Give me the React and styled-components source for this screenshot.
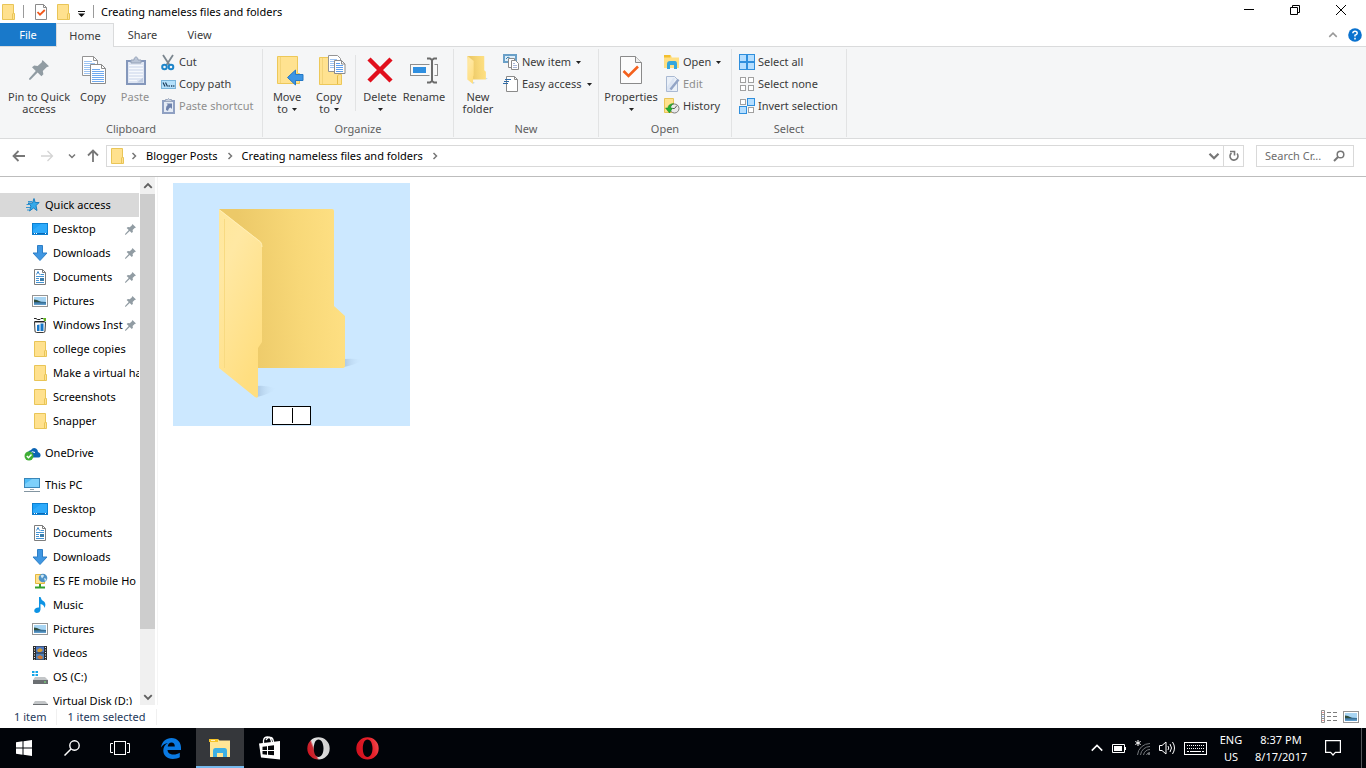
import React, { useState } from "react";
import styled, { createGlobalStyle, css } from "styled-components";

/* ---------- icons ---------- */

const Svg = styled.svg`
  display: block;
  flex: none;
`;

const Icon = ({ w = 16, h = 16, box, children }) => (
  <Svg width={w} height={h} viewBox={box || `0 0 ${w} ${h}`} fill="none" aria-hidden="true">
    {children}
  </Svg>
);

const FolderIcon = () => (
  <Icon w={13} h={16}>
    <path d="M.5.5h11v9h1v6H.5z" fill="#ffe18e" stroke="#e9c557" />
    <path d="M10.5 15.500V10l1-1" stroke="#e9c557" />
  </Icon>
);

const CheckPageIcon = () => (
  <Icon w={12} h={16}>
    <path d="M.5.5h8l3 3v12H.5z" fill="#fff" stroke="#8b8b8b" />
    <path d="M8.5.5v3h3" stroke="#8b8b8b" />
    <path d="M2.5 8l2.5 2.7L9.8 6" stroke="#f2581b" strokeWidth="1.8" />
  </Icon>
);

const PropertiesIcon = () => (
  <Icon w={22} h={28}>
    <path d="M.5.5h15l6 6v21H.5z" fill="#fcfcfc" stroke="#8a8a8a" />
    <path d="M15.5.5v6h6" fill="#eee" stroke="#8a8a8a" />
    <path d="M3.5 15l5 5L18 10.5" stroke="#f4611d" strokeWidth="2.6" />
  </Icon>
);

const PinIcon = ({ size = 20 }) => (
  <Icon w={size} h={size} box="0 0 20 20">
    <path
      d="M13.5 0L20 6.2 17.6 7.2 13.8 11 14.4 14.2 12.4 16.2 8.6 12.6 1.5 19.7H.1V18.4L6.8 11 3 7.2 5.2 5.6 8.6 6 12.6 2.4z"
      fill="#919ca3"
    />
  </Icon>
);

const CopyIcon = () => (
  <Icon w={26} h={28} box="-2 0 26 28">
    <path d="M.5.5h11l4 4v15H.5z" fill="#fff" stroke="#949494" />
    <path d="M11.5.5v4h4" stroke="#949494" />
    <path d="M2 5.5h8M2 7.5h11M2 9.5h7M2 11.5h6M2 13.5h6M2 15.5h6M2 17.5h6" stroke="#9cc3f2" />
    <path d="M8.5 8.5h11l4 4v15h-15z" fill="#fff" stroke="#8b8b8b" />
    <path d="M19.5 8.5v4h4" stroke="#8b8b8b" />
    <path d="M10 13.5h8M10 15.5h12M10 17.5h12M10 19.5h12M10 21.5h12M10 23.5h12M10 25.5h12" stroke="#6fa9ee" />
  </Icon>
);

const PasteIcon = () => (
  <Icon w={22} h={29} box="-2 0 22 29">
    <rect x="1" y="5" width="18" height="23" fill="#dfe6f3" stroke="#8497bb" strokeWidth="2" />
    <path d="M3 9.5h14M3 12.5h14M3 15.5h14M3 18.5h14M3 21.5h14M3 24.5h8" stroke="#f6f9fd" />
    <path d="M11 26.5h6v-5z" fill="#c1cde2" />
    <path d="M5 7V4h3c0-4 4-4 4 0h3v3z" fill="#b9c4d6" stroke="#95a2b8" />
  </Icon>
);

const CutIcon = () => (
  <Icon w={14} h={17}>
    <path d="M2 1l6.5 10M12 1L5.5 11" stroke="#7b868f" strokeWidth="1.8" />
    <circle cx="3.5" cy="13" r="2.3" stroke="#1e85c9" strokeWidth="2" />
    <circle cx="10" cy="13" r="2.3" stroke="#1e85c9" strokeWidth="2" />
  </Icon>
);

const CopyPathIcon = () => (
  <Icon w={15} h={9}>
    <rect x=".5" y=".5" width="14" height="8" fill="#b4e0fb" stroke="#7ab4da" />
    <path d="M2 2.5l2 4M4.5 2.5l2 4" stroke="#1e3d5c" strokeWidth="1.2" />
    <path d="M7.5 6h1.3M10 6h1.3M12.2 6h1.2" stroke="#1e3d5c" strokeWidth="1.3" />
  </Icon>
);

const PasteShortcutIcon = () => (
  <Icon w={13} h={16}>
    <rect x="1" y="3" width="11" height="12" fill="#e4ebf5" stroke="#8fa0c2" strokeWidth="2" />
    <path d="M3.5 3.5v-2h2l1-1 1 1h2v2z" fill="#c4cddd" stroke="#9aa7bd" />
    <path d="M4 12c0-3 .5-4.500 2-5L4.500 5.500H10V11L8.500 9.500C7 10 6.500 11 6 13z" fill="#6f83ad" />
  </Icon>
);

const FolderBody = () => (
  <>
    <path d="M.5 2.5h20v17h2v10H.5z" fill="#ffe290" stroke="#edc859" />
    <path d="M3.5 3v26" stroke="#f3d479" />
    <path d="M18.5 29v-8l1-1.5" stroke="#e6bd49" />
  </>
);

const MoveToIcon = () => (
  <Icon w={34} h={31} box="-7 1 34 31">
    <FolderBody />
    <path d="M10.5 23.5l8-7.500v4.500h7.500v6h-7.500V31z" fill="#3c95e4" stroke="#2579c6" />
  </Icon>
);

const CopyToIcon = () => (
  <Icon w={34} h={31} box="-7 0 34 31">
    <FolderBody />
    <path d="M9.5.5h9l3 3v13h-12z" fill="#fff" stroke="#949494" />
    <path d="M11 4.5h7M11 6.5h5M11 8.5h4M11 10.5h4M11 12.5h4" stroke="#9cc3f2" />
    <path d="M15.5 5.5h7l3.500 3.500v9.500h-10.500z" fill="#fff" stroke="#8b8b8b" />
    <path d="M22.5 5.5v3.500h3.500" stroke="#8b8b8b" />
    <path d="M17 8.5h4M17 10.5h7M17 12.5h7M17 14.5h7M17 16.5h7" stroke="#5f9fec" />
  </Icon>
);

const DeleteIcon = () => (
  <Icon w={26} h={26}>
    <path d="M2 2l22 22M24 2L2 24" stroke="#e10f1c" strokeWidth="4.5" />
  </Icon>
);

const RenameIcon = () => (
  <Icon w={28} h={27}>
    <rect x=".5" y="7.5" width="27" height="11" fill="#f9f9f9" stroke="#8d8d8d" />
    <rect x="3" y="10" width="13" height="6" fill="#2f8fe0" />
    <path d="M22 4v19" stroke="#f5f6f7" strokeWidth="5" />
    <path d="M17 1.500h3l2 1.500 2-1.500h3M22 2v22M17 25.500h3l2-1.500 2 1.500h3" stroke="#6b6b6b" strokeWidth="2" />
  </Icon>
);

const OpenFolder = ({ w, h, id }) => (
  <Icon w={w} h={h} box="46 26 145 190">
    <defs>
      <linearGradient id={`${id}-back`} x1="0" y1=".1" x2="1" y2="0">
        <stop offset=".15" stopColor="#ecc968" />
        <stop offset=".6" stopColor="#f8d878" />
        <stop offset="1" stopColor="#ffe185" />
      </linearGradient>
      <linearGradient id={`${id}-front`} x1="0" y1="0" x2=".5" y2="1">
        <stop offset="0" stopColor="#ffe79b" />
        <stop offset=".3" stopColor="#ffe8a3" />
        <stop offset="1" stopColor="#ffde80" />
      </linearGradient>
      <linearGradient id={`${id}-shade`} x1="0" y1="0" x2="1" y2="0">
        <stop offset="0" stopColor="#acc8e3" />
        <stop offset="1" stopColor="#cce8ff" stopOpacity="0" />
      </linearGradient>
    </defs>
    <path d="M171 176q10-1 19 1-8 5-19 7z" fill={`url(#${id}-shade)`} />
    <path d="M84 203q10-1 20 3-8 5-20 8z" fill={`url(#${id}-shade)`} />
    <path d="M46 26H159q2 0 2 2v95l11 10v50q0 2-2 2H80z" fill={`url(#${id}-back)`} />
    <path d="M46 26l41 32q2 2 2 5v96l-4 6v48q0 3-3 1L46 185z" fill={`url(#${id}-front)`} />
    <path d="M46.5 27l41 32q1.500 2 1.500 5" stroke="#ffeeb5" />
    <path d="M51.5 36v149" stroke="#f8da82" />
  </Icon>
);

const NewItemIcon = () => (
  <Icon>
    <rect x="1" y="1" width="12" height="7" fill="#dceefa" stroke="#6aa0c8" strokeWidth="2" />
    <path d="M3 5l2-2 3 2" stroke="#3b7fae" />
    <path d="M5.5 4.5h6v9h-6z" fill="#fff" stroke="#8a8a8a" />
    <path d="M8.5 6.5h4l3 3v6h-7z" fill="#fff" stroke="#8a8a8a" />
    <path d="M10 9.5h2M10 11.5h4M10 13.5h4" stroke="#a9b7d8" />
  </Icon>
);

const EasyAccessIcon = () => (
  <Icon>
    <path d="M3.5.5h8l3 3v12h-11z" fill="#fff" stroke="#8a8a8a" />
    <path d="M11.5.5v3h3" stroke="#8a8a8a" />
    <path d="M2 3.5h6M1 5.5h5M0 7.5h5" stroke="#2d6aa6" />
  </Icon>
);

const OpenIcon = () => (
  <Icon>
    <path d="M0 1.5h7l1 2h7V14H0z" fill="#ffdf83" />
    <path d="M0 1h6.5v2.500H0z" fill="#f3bf2e" />
    <path d="M3 15V10q0-3 3-3h5q2 0 2 3v5h-3v-4H6v4z" fill="#34a6dd" />
  </Icon>
);

const EditIcon = () => (
  <Icon w={15}>
    <path d="M1.5.5h8l3 3v12h-11z" fill="#eaf0f8" stroke="#a9b9d2" />
    <path d="M2 15V11l6-9h2l-4 13z" fill="#dce5f3" />
    <path d="M13.5 3.5l-8 10" stroke="#93a5c6" strokeWidth="2.5" />
  </Icon>
);

const HistoryIcon = () => (
  <Icon>
    <path d="M.5.5h9v9h1v5H.5z" fill="#ffe18e" stroke="#e9c557" />
    <circle cx="10.5" cy="10.5" r="4.5" fill="#e9e9e9" stroke="#7d7d7d" />
    <path d="M10.5 10.500l2.500-3M10.500 10.500h-2" stroke="#555" />
    <path d="M9.5 5.500Q4 6 4 10H1.500l4 5 3-5H6.500q0-3 3-4.500z" fill="#25b031" stroke="#12861c" strokeWidth=".5" />
  </Icon>
);

const SelectIcon = ({ on }) => (
  <Icon>
    {[[0, 0], [8, 0], [0, 8], [8, 8]].map(([x, y], i) =>
      on[i] ? (
        <rect key={i} x={x + 0.5} y={y + 0.5} width="7" height="7" fill="#b5deff" stroke="#2f8fdd" />
      ) : (
        <rect key={i} x={x + 1.5} y={y + 1.5} width="5" height="5" fill="#fff" stroke="#a0a0a0" />
      )
    )}
  </Icon>
);

const Chevron = ({ dir = "down", size = 8, color = "#777", weight = 1.5 }) => {
  const d = {
    down: "M1 2.5l3 3 3-3",
    up: "M1 5.5l3-3 3 3",
    right: "M2.5 1l3 3-3 3",
  }[dir];
  return (
    <Icon w={size} h={size} box="0 0 8 8">
      <path d={d} stroke={color} strokeWidth={weight} />
    </Icon>
  );
};

const Caret = () => (
  <Icon w={5} h={3}>
    <path d="M0 0h5L2.5 3z" fill="#222" />
  </Icon>
);

const Arrow = ({ dir, color = "#777" }) => {
  const d = {
    left: "M13 7H1.5M6.5 2l-5 5 5 5",
    right: "M1 7h11.5M7.5 2l5 5-5 5",
    up: "M7 13V1.5M2 6.5l5-5 5 5",
  }[dir];
  return (
    <Icon w={14} h={14}>
      <path d={d} stroke={color} strokeWidth={dir === "right" ? 1.3 : 1.8} />
    </Icon>
  );
};

const StarIcon = () => (
  <Icon>
    <path d="M10 1.500l1.200 4h4l-3.200 3 1 5L9.500 11l-4 3 1.500-5L4 6h4.500z" fill="#35a9e9" stroke="#1b7fc0" />
    <path d="M4 4.5h4M2.5 7.5h4M2 10.5h4M3 13h2" stroke="#3596d0" />
  </Icon>
);

const DesktopIcon = () => (
  <Icon>
    <rect x=".5" y="2.5" width="15" height="11" fill="#1ea1f7" stroke="#0c7fd0" />
    <path d="M1 13V9l8-6h6v10z" fill="#2fabfb" />
    <path d="M1 12.5h14" stroke="#0a69b5" />
    <path d="M2 12.5h1M4 12.5h1M13 12.5h1" stroke="#fff" />
  </Icon>
);

const DownloadIcon = () => (
  <Icon>
    <path d="M5.5.5h5v7.500h4.500L8 15.500 1 8h4.500z" fill="#3f97e2" stroke="#2e7fc6" />
  </Icon>
);

const DocumentIcon = () => (
  <Icon>
    <path d="M2.5.5h8l3 3v12h-11z" fill="#fff" stroke="#7d7d7d" />
    <path d="M10.5.5v3h3" stroke="#7d7d7d" />
    <path d="M4.5 5.5l1.500-3 1.500 3" stroke="#3a86c8" />
    <path d="M8.5 5.5H12M4 7.5h8M4 9.5h3M4 11.5h3M4 13.5h8" stroke="#4393d3" />
    <rect x="8" y="9" width="4" height="3" fill="#3a7dab" />
  </Icon>
);

const PictureIcon = () => (
  <Icon>
    <rect x=".5" y="2.5" width="15" height="11" fill="#fff" stroke="#959595" />
    <rect x="2" y="4" width="12" height="8" fill="#a8d5f3" />
    <path d="M2 7l5 1.500L14 9v3H2z" fill="#3a7095" />
    <path d="M2 6.5l3 .5 4 2H2z" fill="#2f4d3c" />
    <path d="M2 10.5h12V12H2z" fill="#5f9ccb" />
  </Icon>
);

const RecycleIcon = () => (
  <Icon>
    <path d="M2.500 5h11l-.5 9q0 1.500-1.500 1.500h-7Q3 15.500 3 14z" fill="#fff" stroke="#3a3a3a" />
    <path d="M2 1.500h2l1.500 1H8l1-1h2M2.500 4.500h10" stroke="#222" />
    <path d="M11 1h3v3h-2z" fill="#5fb321" />
    <path d="M5 8l2.500-.5V14H5zM8.500 6.500h3V14h-3z" fill="#1577c9" />
  </Icon>
);

const CloudIcon = () => (
  <Icon w={17}>
    <path d="M4 10q-1-4 3-5 2-3 5-1.500 2 1 2 3.500 3 1 2.500 4-.5 1.500-2 1.500H6z" fill="#0b64b4" />
    <path d="M6 8.5q2-3 5-1" stroke="#fff" />
    <circle cx="5" cy="11" r="4.5" fill="#3fae36" />
    <path d="M2.8 11l1.700 1.800L7.500 9.500" stroke="#fff" strokeWidth="1.4" />
  </Icon>
);

const ComputerIcon = () => (
  <Icon>
    <rect x=".5" y="1.5" width="15" height="9" fill="#4fbcf7" stroke="#3a86b8" />
    <path d="M1 10V7l7-5h7v8z" fill="#7dd0fb" />
    <path d="M6 12.5h4" stroke="#9aa7b0" />
    <path d="M0 14.5h16" stroke="#8395a1" />
  </Icon>
);

const FtpIcon = () => (
  <Icon>
    <path d="M3.5 1.5h9v9h-9z" fill="#ffe18e" stroke="#e3b93f" />
    <circle cx="11" cy="5" r="4.3" fill="#4f93c8" />
    <path d="M8.5 2.500q3-1.500 3.500.5l-2 2.500zM12 5l2.500 1-1.500 2.500z" fill="#cfe9f6" />
    <path d="M8 11v3M3 14.5h10" stroke="#34a02c" strokeWidth="2" />
  </Icon>
);

const MusicIcon = () => (
  <Icon>
    <path d="M7 0h1.500q.5 3 3.500 4.500 2.500 2.500.5 6.500-.5-3.500-4-4v5.500Q8 16 4.500 16 1.500 15.500 2.500 12.500 4 10 7 10.500z" fill="#0d93e4" />
  </Icon>
);

const VideoIcon = () => (
  <Icon>
    <rect x="1" y="1" width="14" height="14" fill="#2d2d2d" />
    <rect x="4" y="1.5" width="8" height="6" fill="#4d79c4" />
    <rect x="4" y="8.5" width="8" height="6" fill="#4e81bb" />
    <path d="M5 5l3-2 3 2-2 2H6z" fill="#d59a2e" />
    <path d="M5 12l3-2 3 2-1 2H7z" fill="#cf7a34" />
    <path d="M2.5 2v13M13.5 2v13" stroke="#eee" strokeDasharray="1 1.5" />
  </Icon>
);

const DriveIcon = ({ windows }) => (
  <Icon>
    <path d="M3 8h10l3 3H1z" fill="#c3c6c8" />
    <path d="M1 11h15v4H1z" fill="#6b6f72" />
    <path d="M12 13h2" stroke="#7df07d" />
    {windows && <path d="M0 2h2.500v2H0zM3.500 2H6v2H3.500zM0 5h2.500v2H0zM3.500 5H6v2H3.500z" fill="#14a5e8" />}
  </Icon>
);

const RefreshIcon = () => (
  <Icon w={12} h={12}>
    <path d="M9 3.5A4 4 0 1 1 3.500 3" stroke="#777" strokeWidth="1.6" />
    <path d="M2 1.500h4.500v4" stroke="#777" strokeWidth="1.6" />
  </Icon>
);

const SearchIcon = () => (
  <Icon w={12} h={12}>
    <circle cx="7.5" cy="4.5" r="3.3" stroke="#777" strokeWidth="1.5" />
    <path d="M5 7L1 11" stroke="#777" strokeWidth="2" />
  </Icon>
);

const HelpIcon = () => (
  <Icon w={14} h={14}>
    <circle cx="7" cy="7" r="6.8" fill="#0a72cf" />
    <path d="M4.8 5.300Q5 3.300 7 3.300q2.200 0 2.200 1.900Q9.200 6.500 7 7.300V8.500M7 9.800v1.600" stroke="#fff" strokeWidth="1.5" />
  </Icon>
);

const DetailsIcon = () => (
  <Icon h={13}>
    <path d="M.5.5h3v12h-3zM0 4.500h4M0 8.500h4" stroke="#8f8f8f" />
    <path d="M6 2.5h4M12 2.5h4M6 6.5h4M12 6.5h4M6 10.5h4M12 10.5h4" stroke="#7c7c7c" />
    <path d="M1.5 2.5h1M1.5 10.5h1" stroke="#c33" />
    <path d="M1.5 6.5h1" stroke="#36c" />
  </Icon>
);

const ExplorerIcon = () => (
  <Icon w={22} h={18}>
    <path d="M1 0h8l1.500 1.500H21V18H1z" fill="#ffe696" />
    <path d="M0 0h9v3H0z" fill="#f6c427" />
    <path d="M2 1.500h4" stroke="#fff3c4" />
    <path d="M4 18v-6q0-3 2.500-3h9q2.500 0 2.500 3v6h-4v-4H8v4z" fill="#3cb0e5" />
  </Icon>
);

const WinIcon = () => (
  <Icon>
    <path d="M0 2.300L6.500 1.300V7.500H0zM7.500 1.200L16 0v7.500H7.500zM0 8.500h6.500v6.200L0 13.700zM7.500 8.500H16V16l-8.500-1.200z" fill="#fff" />
  </Icon>
);

const TaskSearchIcon = () => (
  <Icon>
    <circle cx="10.5" cy="5.5" r="4.7" stroke="#fff" strokeWidth="1.4" />
    <path d="M7 9L.5 15.500" stroke="#fff" strokeWidth="1.5" />
  </Icon>
);

const TaskViewIcon = () => (
  <Icon w={20} h={14}>
    <rect x="4.5" y=".5" width="11" height="13" stroke="#fff" />
    <path d="M3 2.500H.5v9H3M17 2.500h2.500v9H17" stroke="#fff" />
  </Icon>
);

const EdgeIcon = () => (
  <Icon w={20} h={21}>
    <path
      d="M0 9.500C1 3.500 5 0 10.500 0 16.500 0 20 4.500 20 9.500V12H6.500c.2 3 2.600 4.500 6 4.500 2.300 0 4.500-.7 6.300-1.800v4.600C17 20.400 14.500 21 11.700 21 6 21 2.300 17.600 2.300 12.600c0-3.500 1.700-6 4.700-7.600C4.300 5.300 1.700 6.700 0 9.500zM6.700 8.500h7.100C13.800 6 12.600 4.600 10.500 4.600 8.500 4.600 7.200 6 6.700 8.500z"
      fill="#0a7ae2"
    />
  </Icon>
);

const StoreIcon = () => (
  <Icon w={21} h={24}>
    <path d="M0 7.500L21 5v18.500L2 21.500z" fill="#fff" />
    <path d="M4.5 8V4.500Q5 1 8.500 1q3.500 0 4 5M7 4Q9 .5 12 1.500 14 2 14.500 6" stroke="#fff" strokeWidth="1.3" />
    <path d="M3.500 10.700l4.500-.5v3.800H3.500zM9 10l6-.7V14H9zM3.500 15H8v3.700l-4.500-.4zM9 15h6v4.300l-6-.5z" fill="#05070a" />
  </Icon>
);

const OperaIcon = ({ silver }) => (
  <Icon w={23} h={23}>
    <defs>
      <linearGradient id={silver ? "opera-silver" : "opera-red"} x1="0" y1={silver ? ".7" : ".3"} x2="1" y2={silver ? ".3" : "0"}>
        <stop offset="0" stopColor="#d3121f" />
        <stop offset={silver ? ".28" : ".6"} stopColor={silver ? "#c62a32" : "#e8222b"} />
        <stop offset={silver ? ".36" : "1"} stopColor={silver ? "#e2e2e2" : "#f0585a"} />
        <stop offset="1" stopColor={silver ? "#cfcfcf" : "#f0585a"} />
      </linearGradient>
    </defs>
    <path
      fillRule="evenodd"
      d="M11.500.2a11.200 11.200 0 1 1 0 22.400 11.200 11.200 0 0 1 0-22.400zM11.500 2.500C8.500 2.500 6.800 6.500 6.800 11.300s1.700 8.800 4.700 8.800 5-4 5-8.800-2-8.800-5-8.800z"
      fill={`url(#${silver ? "opera-silver" : "opera-red"})`}
    />
  </Icon>
);

const BatteryIcon = () => (
  <Icon w={15} h={9}>
    <path d="M.5.5h12v8H.5zM13.500 3v3" stroke="#fff" />
    <rect x="2" y="2" width="8" height="5" fill="#fff" />
  </Icon>
);

const WifiIcon = () => (
  <Icon>
    <path d="M3 0v6M.3 1.500l5.400 3M5.700 1.500l-5.400 3" stroke="#fff" />
    <path d="M2.5 15A12.500 12.500 0 0 1 15 3.500M5.500 15A9.500 9.500 0 0 1 15 6.500M8.500 15A6.500 6.500 0 0 1 15 9.500M11.500 15A3.500 3.500 0 0 1 15 12.500" stroke="#75797d" />
    <circle cx="14" cy="14" r="1" fill="#8d9195" />
  </Icon>
);

const VolumeIcon = () => (
  <Icon w={17} h={14}>
    <path d="M.5 4.500h2.500l4-3.500v12L3 9.500H.5z" stroke="#fff" />
    <path d="M9 5q1.500 2 0 4M11 3q3 4 0 8M13.500 1q4 6 0 12" stroke="#fff" />
  </Icon>
);

const KeyboardIcon = () => (
  <Icon w={23} h={13}>
    <rect x=".5" y=".5" width="22" height="12" stroke="#fff" />
    <path d="M3 3.500h17M3 6.500h17" stroke="#fff" strokeDasharray="1 1" />
    <path d="M3 9.500h2M6 9.500h11M18 9.500h2" stroke="#fff" />
  </Icon>
);

const NotificationIcon = () => (
  <Icon>
    <path d="M.6.600h14.800v11.800h-5L8 15l-2.400-2.600h-5z" stroke="#fff" strokeWidth="1.2" />
  </Icon>
);

/* ---------- data ---------- */

const quickAccess = [
  { name: "Desktop", icon: <DesktopIcon />, pinned: true },
  { name: "Downloads", icon: <DownloadIcon />, pinned: true },
  { name: "Documents", icon: <DocumentIcon />, pinned: true },
  { name: "Pictures", icon: <PictureIcon />, pinned: true },
  { name: "Windows Inst", icon: <RecycleIcon />, pinned: true },
  { name: "college copies", icon: <FolderIcon /> },
  { name: "Make a virtual ha", icon: <FolderIcon /> },
  { name: "Screenshots", icon: <FolderIcon /> },
  { name: "Snapper", icon: <FolderIcon /> },
];

const thisPc = [
  { name: "Desktop", icon: <DesktopIcon /> },
  { name: "Documents", icon: <DocumentIcon /> },
  { name: "Downloads", icon: <DownloadIcon /> },
  { name: "ES FE mobile Ho", icon: <FtpIcon /> },
  { name: "Music", icon: <MusicIcon /> },
  { name: "Pictures", icon: <PictureIcon /> },
  { name: "Videos", icon: <VideoIcon /> },
  { name: "OS (C:)", icon: <DriveIcon windows /> },
  { name: "Virtual Disk (D:)", icon: <DriveIcon /> },
];

/* ---------- parts ---------- */

const Big = ({ icon, lines, caret, width, disabled }) => (
  <BigButton type="button" $width={width} disabled={disabled}>
    <BigIcon>{icon}</BigIcon>
    <span>{lines[0]}</span>
    {(lines[1] || caret) && (
      <SecondLine>
        {lines[1]}
        {caret && <Caret />}
      </SecondLine>
    )}
  </BigButton>
);

const Small = ({ icon, label, caret, disabled }) => (
  <SmallButton type="button" disabled={disabled}>
    <IconSlot>{icon}</IconSlot>
    <SmallLabel>{label}</SmallLabel>
    {caret && <Caret />}
  </SmallButton>
);

const NavRow = ({ item, level = 0, selected }) => (
  <NavItem>
    <NavLink href="#" $level={level} $selected={selected}>
      <IconSlot>{item.icon}</IconSlot>
      <NavName>{item.name}</NavName>
      {item.pinned && (
        <PinSlot>
          <PinIcon size={11} />
        </PinSlot>
      )}
    </NavLink>
  </NavItem>
);

const App = () => {
  const [search, setSearch] = useState("");
  const [name, setName] = useState("   ");

  return (
    <>
      <GlobalStyle />
      <Screen>
        <TitleBar>
          <FolderIcon />
          <Divider />
          <QuickItems>
            <CheckPageIcon />
            <FolderIcon />
          </QuickItems>
          <QuickMenu type="button" aria-label="Customize Quick Access Toolbar">
            <Icon w={7} h={6}>
              <path d="M0 .5h7" stroke="#111" />
              <path d="M0 2.5h7L3.500 6z" fill="#111" />
            </Icon>
          </QuickMenu>
          <Divider />
          <Title>Creating nameless files and folders</Title>
          <WindowButtons>
            <WindowButton type="button" aria-label="Minimize">
              <Icon w={10} h={10}><path d="M0 4.500h10" stroke="#000" /></Icon>
            </WindowButton>
            <WindowButton type="button" aria-label="Restore">
              <Icon w={10} h={10}>
                <path d="M.5 2.5h7v7h-7zM2.500 2V.5h7v7H8" stroke="#000" />
              </Icon>
            </WindowButton>
            <WindowButton type="button" aria-label="Close">
              <Icon w={10} h={10}><path d="M0 0l10 10M10 0L0 10" stroke="#000" /></Icon>
            </WindowButton>
          </WindowButtons>
        </TitleBar>

        <Tabs>
          <FileTab type="button">File</FileTab>
          <Tab type="button" $active>Home</Tab>
          <Tab type="button">Share</Tab>
          <Tab type="button">View</Tab>
          <TabTools>
            <PlainButton type="button" aria-label="Minimize the Ribbon">
              <Chevron dir="up" size={10} color="#999" weight={1.2} />
            </PlainButton>
            <PlainButton type="button" aria-label="Help"><HelpIcon /></PlainButton>
          </TabTools>
        </Tabs>

        <Ribbon>
          <Group $width={263}>
            <Tools $pad={6}>
              <Big icon={<PinIcon />} lines={["Pin to Quick", "access"]} width={66} />
              <Big icon={<CopyIcon />} lines={["Copy"]} width={42} />
              <Big icon={<PasteIcon />} lines={["Paste"]} width={42} disabled />
              <SmallColumn>
                <Small icon={<CutIcon />} label="Cut" />
                <Small icon={<CopyPathIcon />} label="Copy path" />
                <Small icon={<PasteShortcutIcon />} label="Paste shortcut" disabled />
              </SmallColumn>
            </Tools>
            <GroupLabel>Clipboard</GroupLabel>
          </Group>
          <Group $width={191}>
            <Tools $pad={3}>
              <Big icon={<MoveToIcon />} lines={["Move", "to"]} width={42} caret />
              <Big icon={<CopyToIcon />} lines={["Copy", "to"]} width={42} caret />
              <ToolDivider />
              <Big icon={<DeleteIcon />} lines={["Delete"]} width={42} caret />
              <Big icon={<RenameIcon />} lines={["Rename"]} width={46} />
            </Tools>
            <GroupLabel>Organize</GroupLabel>
          </Group>
          <Group $width={145}>
            <Tools $pad={3}>
              <Big icon={<OpenFolder w={22} h={28} id="new" />} lines={["New", "folder"]} width={42} />
              <SmallColumn>
                <Small icon={<NewItemIcon />} label="New item" caret />
                <Small icon={<EasyAccessIcon />} label="Easy access" caret />
              </SmallColumn>
            </Tools>
            <GroupLabel>New</GroupLabel>
          </Group>
          <Group $width={133}>
            <Tools $pad={3}>
              <Big icon={<PropertiesIcon />} lines={["Properties"]} width={58} caret />
              <SmallColumn>
                <Small icon={<OpenIcon />} label="Open" caret />
                <Small icon={<EditIcon />} label="Edit" disabled />
                <Small icon={<HistoryIcon />} label="History" />
              </SmallColumn>
            </Tools>
            <GroupLabel>Open</GroupLabel>
          </Group>
          <Group $width={115}>
            <Tools $pad={3}>
              <SmallColumn>
                <Small icon={<SelectIcon on={[1, 1, 1, 1]} />} label="Select all" />
                <Small icon={<SelectIcon on={[0, 0, 0, 0]} />} label="Select none" />
                <Small icon={<SelectIcon on={[0, 1, 1, 0]} />} label="Invert selection" />
              </SmallColumn>
            </Tools>
            <GroupLabel>Select</GroupLabel>
          </Group>
        </Ribbon>

        <AddressBar>
          <NavButtons>
            <PlainButton type="button" aria-label="Back"><Arrow dir="left" /></PlainButton>
            <PlainButton type="button" aria-label="Forward"><Arrow dir="right" color="#d4d4d4" /></PlainButton>
            <Recent type="button" aria-label="Recent locations"><Chevron /></Recent>
            <PlainButton type="button" aria-label="Up"><Arrow dir="up" /></PlainButton>
          </NavButtons>
          <Address>
            <FolderIcon />
            <Crumbs>
              <Chevron dir="right" />
              <Crumb type="button">Blogger Posts</Crumb>
              <Chevron dir="right" />
              <Crumb type="button">Creating nameless files and folders</Crumb>
              <Chevron dir="right" />
            </Crumbs>
            <PlainButton type="button" aria-label="Previous locations">
              <Chevron size={12} />
            </PlainButton>
            <Refresh type="button" aria-label="Refresh"><RefreshIcon /></Refresh>
          </Address>
          <SearchBox>
            <SearchInput
              aria-label="Search"
              placeholder="Search Cr..."
              value={search}
              onChange={(e) => setSearch(e.target.value)}
            />
            <SearchIcon />
          </SearchBox>
        </AddressBar>

        <Body>
          <NavPane>
            <NavList>
              <NavRow item={{ name: "Quick access", icon: <StarIcon /> }} selected />
              {quickAccess.map((item) => (
                <NavRow key={item.name} item={item} level={1} />
              ))}
              <NavGap />
              <NavRow item={{ name: "OneDrive", icon: <CloudIcon /> }} />
              <NavGap />
              <NavRow item={{ name: "This PC", icon: <ComputerIcon /> }} />
              {thisPc.map((item) => (
                <NavRow key={item.name} item={item} level={1} />
              ))}
            </NavList>
          </NavPane>
          <ScrollBar>
            <ScrollButton type="button" aria-label="Scroll up">
              <Chevron dir="up" size={10} color="#606060" />
            </ScrollButton>
            <ScrollTrack><ScrollThumb /></ScrollTrack>
            <ScrollButton type="button" aria-label="Scroll down">
              <Chevron size={10} color="#606060" />
            </ScrollButton>
          </ScrollBar>
          <Files>
            <Tile>
              <OpenFolder w={145} h={190} id="tile" />
              <NameField>
                <NameInput aria-label="Folder name" value={name} onChange={(e) => setName(e.target.value)} />
                <TextCursor />
              </NameField>
            </Tile>
          </Files>
        </Body>

        <StatusBar>
          <StatusText>1 item</StatusText>
          <StatusText>1 item selected</StatusText>
          <ViewButtons>
            <PlainButton type="button" aria-label="Details view"><DetailsIcon /></PlainButton>
            <PlainButton type="button" aria-label="Large thumbnails"><PictureIcon /></PlainButton>
          </ViewButtons>
        </StatusBar>

        <TaskBar>
          <TaskButton type="button" aria-label="Start"><WinIcon /></TaskButton>
          <TaskButton type="button" aria-label="Search"><TaskSearchIcon /></TaskButton>
          <TaskButton type="button" aria-label="Task view"><TaskViewIcon /></TaskButton>
          <Pinned>
            <TaskButton type="button" aria-label="Edge"><EdgeIcon /></TaskButton>
            <TaskButton type="button" aria-label="File Explorer" $active><ExplorerIcon /></TaskButton>
            <TaskButton type="button" aria-label="Store"><StoreIcon /></TaskButton>
            <TaskButton type="button" aria-label="Opera Developer"><OperaIcon silver /></TaskButton>
            <TaskButton type="button" aria-label="Opera"><OperaIcon /></TaskButton>
          </Pinned>
          <Tray>
            <PlainButton type="button" aria-label="Show hidden icons">
              <Chevron dir="up" size={14} color="#fff" weight={0.9} />
            </PlainButton>
            <BatteryIcon />
            <WifiIcon />
            <VolumeIcon />
            <KeyboardIcon />
            <TrayText $width={32}>ENG<br />US</TrayText>
            <TrayText $width={52}>8:37 PM<br />8/17/2017</TrayText>
            <Notifications type="button" aria-label="Notifications"><NotificationIcon /></Notifications>
            <ShowDesktop type="button" aria-label="Show desktop" />
          </Tray>
        </TaskBar>
      </Screen>
    </>
  );
};

/* ---------- styles ---------- */

const GlobalStyle = createGlobalStyle`
  * {
    box-sizing: border-box;
  }
  body {
    margin: 0;
    background: #fff;
  }
  body, button, input {
    font-family: "Noto Sans", "Open Sans", sans-serif;
    font-size: 11px;
    line-height: 16px;
  }
  button {
    padding: 0;
    border: none;
    background: none;
    color: inherit;
    white-space: nowrap;
  }
`;

const Screen = styled.div`
  display: flex;
  flex-direction: column;
  height: 100vh;
  overflow: hidden;
  color: #000;
`;

const PlainButton = styled.button`
  display: flex;
  align-items: center;
  justify-content: center;
`;

const TitleBar = styled.header`
  display: flex;
  align-items: center;
  gap: 8px;
  height: 23px;
  flex: none;
  padding-left: 2px;
`;

const Divider = styled.span`
  width: 1px;
  height: 13px;
  margin-right: 3px;
  background: #9a9a9a;
`;

const QuickItems = styled.div`
  display: flex;
  gap: 10px;
`;

const QuickMenu = styled(PlainButton)`
  margin-top: 4px;
`;

const Title = styled.h1`
  flex: 1;
  margin: 0 0 0 -4px;
  font-size: 11px;
  font-weight: 400;
`;

const WindowButtons = styled.div`
  display: flex;
  padding-right: 2px;
`;

const WindowButton = styled(PlainButton)`
  width: 46px;
  height: 24px;
  padding-bottom: 3px;
`;

const Tabs = styled.nav`
  display: flex;
  height: 24px;
  flex: none;
  border-bottom: 1px solid #dadbdc;
  color: #3b3b3b;
`;

const Tab = styled.button`
  width: 57px;
  ${(props) =>
    props.$active &&
    css`
      width: 58px;
      height: 24px;
      border: 1px solid #dadbdc;
      border-bottom: none;
      background: #f5f6f7;
    `}
`;

const FileTab = styled(Tab)`
  width: 56px;
  background: #1979ca;
  color: #fff;
`;

const TabTools = styled.div`
  display: flex;
  align-items: center;
  gap: 10px;
  margin-left: auto;
  padding-right: 4px;
`;

const Ribbon = styled.section`
  display: flex;
  height: 92px;
  flex: none;
  background: #f5f6f7;
  border-bottom: 1px solid #dadbdc;
  color: #3b3b3b;
`;

const Group = styled.div`
  display: flex;
  flex-direction: column;
  width: ${(props) => props.$width}px;
  margin: 2px 0 1px;
  border-right: 1px solid #e2e3e4;
`;

const Tools = styled.div`
  display: flex;
  flex: 1;
  padding-top: 2px;
  padding-left: ${(props) => props.$pad}px;
`;

const ToolDivider = styled.span`
  width: 1px;
  height: 56px;
  margin: 4px 3px 0 5px;
  background: #e2e3e4;
`;

const BigButton = styled.button`
  display: flex;
  flex-direction: column;
  align-items: center;
  width: ${(props) => props.$width}px;
  line-height: 12px;
  color: ${(props) => (props.disabled ? "#8e8e8e" : "inherit")};
`;

const BigIcon = styled.span`
  display: flex;
  align-items: center;
  justify-content: center;
  height: 38px;
  margin-bottom: 2px;
`;

const SecondLine = styled.span`
  display: flex;
  align-items: center;
  gap: 4px;
  height: 12px;
`;

const SmallColumn = styled.div`
  display: flex;
  flex-direction: column;
  padding-left: 4px;
`;

const SmallButton = styled.button`
  display: flex;
  align-items: center;
  gap: 3px;
  height: 22px;
  color: ${(props) => (props.disabled ? "#8e8e8e" : "inherit")};
`;

const SmallLabel = styled.span`
  padding-right: 2px;
`;

const IconSlot = styled.span`
  display: flex;
  align-items: center;
  justify-content: center;
  width: 16px;
  height: 16px;
  flex: none;
`;

const GroupLabel = styled.div`
  text-align: center;
  color: #5f5f5f;
`;

const AddressBar = styled.div`
  display: flex;
  align-items: center;
  height: 38px;
  flex: none;
  padding: 0 12px 4px;
  border-bottom: 1px solid #bdbdbd;
`;

const NavButtons = styled.div`
  display: flex;
  align-items: center;
  gap: 14px;
  width: 94px;
`;

const Recent = styled(PlainButton)`
  margin-right: -4px;
`;

const Address = styled.div`
  display: flex;
  align-items: center;
  flex: 1;
  height: 22px;
  padding-left: 4px;
  border: 1px solid #d9d9d9;
`;

const Crumbs = styled.div`
  display: flex;
  align-items: center;
  flex: 1;
  gap: 8px;
  padding-left: 6px;
`;

const Crumb = styled.button`
  color: #000;
`;

const Refresh = styled(PlainButton)`
  width: 20px;
  height: 20px;
  margin-left: 3px;
  border-left: 1px solid #d9d9d9;
`;

const SearchBox = styled.label`
  display: flex;
  align-items: center;
  width: 98px;
  height: 22px;
  margin-left: 12px;
  padding: 0 8px;
  border: 1px solid #d9d9d9;
`;

const SearchInput = styled.input`
  flex: 1;
  min-width: 0;
  padding: 0;
  border: none;
  outline: none;
  &::placeholder {
    color: #6d6d6d;
  }
`;

const Body = styled.main`
  display: flex;
  flex: 1;
  min-height: 0;
`;

const NavPane = styled.nav`
  width: 139px;
  flex: none;
  overflow: hidden;
`;

const NavList = styled.ul`
  margin: 0;
  padding: 16px 0 0;
  list-style: none;
`;

const NavItem = styled.li`
  height: 24px;
`;

const NavGap = styled.li`
  height: 8px;
`;

const NavLink = styled.a`
  display: flex;
  align-items: center;
  gap: 5px;
  height: 24px;
  padding-left: ${(props) => (props.$level ? 32 : 24)}px;
  background: ${(props) => (props.$selected ? "#d9d9d9" : "transparent")};
  color: #000;
  text-decoration: none;
`;

const NavName = styled.span`
  flex: 1;
  overflow: hidden;
  white-space: nowrap;
`;

const PinSlot = styled.span`
  margin-left: -4px;
  padding-right: 3px;
`;

const ScrollBar = styled.div`
  display: flex;
  flex-direction: column;
  width: 15px;
  flex: none;
  margin-left: 1px;
  background: #f0f0f0;
`;

const ScrollButton = styled(PlainButton)`
  height: 17px;
`;

const ScrollTrack = styled.div`
  flex: 1;
`;

const ScrollThumb = styled.div`
  height: 88%;
  background: #cdcdcd;
`;

const Files = styled.section`
  flex: 1;
  margin-left: 2px;
  padding: 6px 16px 0 15px;
  border-left: 1px solid #f5f5f5;
`;

const Tile = styled.div`
  display: flex;
  flex-direction: column;
  align-items: center;
  gap: 7px;
  width: 237px;
  height: 243px;
  padding-top: 26px;
  background: #cce8ff;
`;

const NameField = styled.div`
  position: relative;
  width: 39px;
  height: 19px;
`;

const NameInput = styled.input`
  display: block;
  width: 100%;
  height: 100%;
  padding: 0 2px;
  border: 1px solid #000;
  border-radius: 0;
  background: #fff;
  outline: none;
`;

const TextCursor = styled.span`
  position: absolute;
  top: 2px;
  left: 20px;
  width: 1px;
  height: 15px;
  background: #000;
`;

const StatusBar = styled.footer`
  display: flex;
  align-items: center;
  height: 23px;
  flex: none;
  padding: 0 7px 0 4px;
  color: #1e395b;
`;

const StatusText = styled.span`
  padding: 0 10px;
  border-right: 1px solid #f0f0f0;
`;

const ViewButtons = styled.div`
  display: flex;
  gap: 6px;
  margin-left: auto;
`;

const TaskBar = styled.footer`
  display: flex;
  height: 40px;
  flex: none;
  background: #010409;
  color: #fff;
`;

const TaskButton = styled(PlainButton)`
  width: 48px;
  height: 40px;
  ${(props) =>
    props.$active &&
    css`
      background: #35373b;
      box-shadow: inset 0 -2px #76b9ed;
    `}
`;

const Pinned = styled.div`
  display: flex;
  gap: 1px;
  margin-left: 3px;
`;

const Tray = styled.div`
  display: flex;
  align-items: center;
  gap: 8px;
  margin-left: auto;
`;

const TrayText = styled.div`
  width: ${(props) => props.$width}px;
  text-align: center;
  line-height: 17px;
  white-space: nowrap;
`;

const Notifications = styled(PlainButton)`
  width: 36px;
  height: 40px;
`;

const ShowDesktop = styled.button`
  width: 5px;
  height: 40px;
  margin-left: 2px;
  border-left: 1px solid #53565a;
`;

export default App;
